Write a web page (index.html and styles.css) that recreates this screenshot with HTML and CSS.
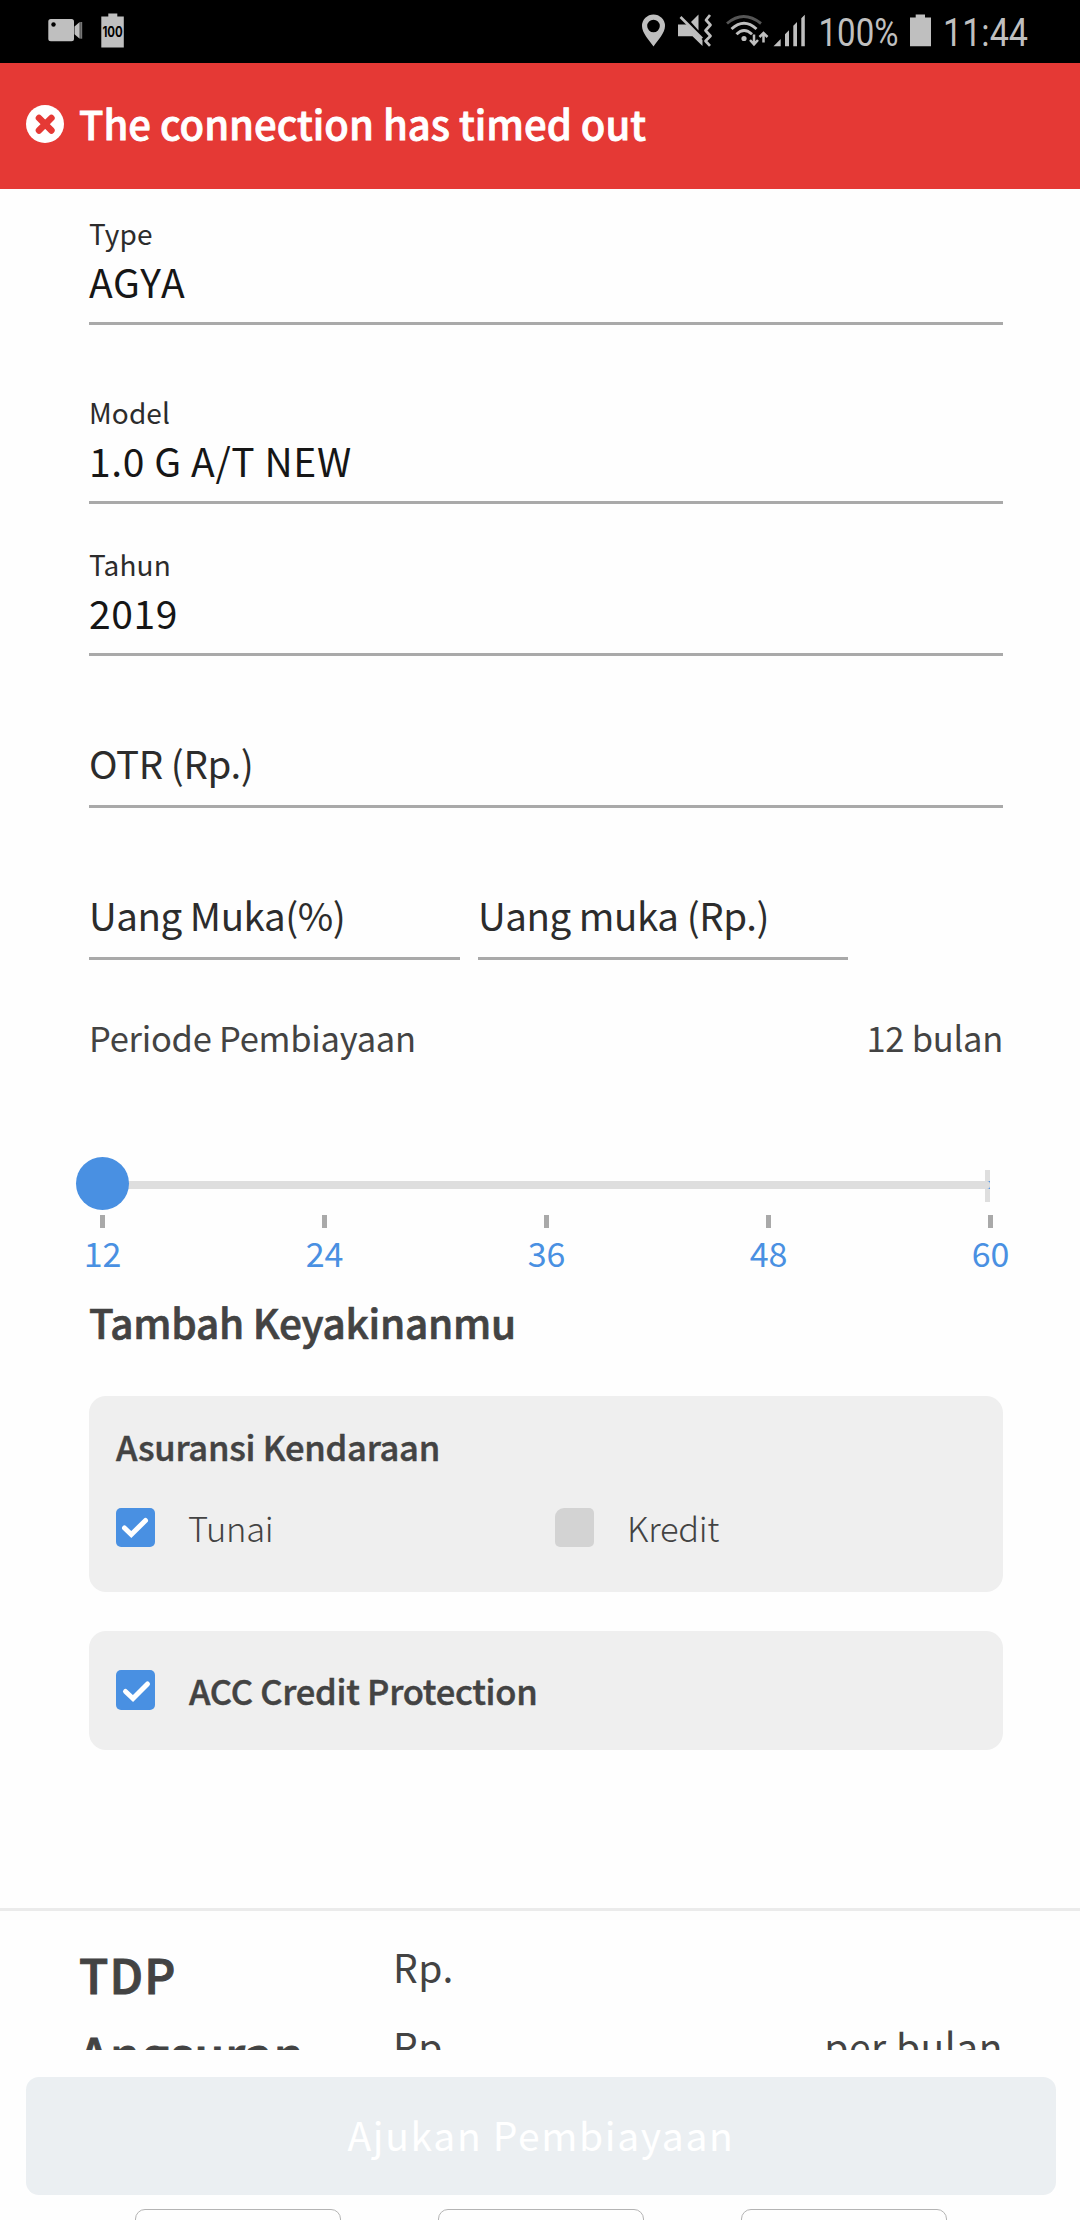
FILE: index.html
```html
<!DOCTYPE html>
<html lang="id">
<head>
<meta charset="utf-8">
<title>Simulasi Pembiayaan</title>
<link rel="stylesheet" href="styles.css">
</head>
<body>
<div class="screen">
  <header class="status-bar">
    <svg class="status-left" width="84" height="63" viewBox="46 0 84 63">
      <rect x="48.300" y="19" width="25.700" height="22.300" rx="2.500" fill="#bfbfbf"/>
      <circle cx="53.500" cy="24.500" r="2.200" fill="#000"/>
      <path d="M74.500 26.500L79.700 22V38.700L74.500 34.300Z" fill="#bfbfbf"/>
      <path d="M81.200 22V38.700" stroke="#777" stroke-width="2"/>
      <path d="M108.300 13.500h9v3h6.500v31h-22.500v-31h7z" fill="#bfbfbf"/>
      <text x="102.400" y="37" class="battery-label" textLength="20.300" lengthAdjust="spacingAndGlyphs">100</text>
    </svg>
    <svg class="status-right" width="400" height="63" viewBox="640 0 400 63">
      <g fill="#bfbfbf">
        <path fill-rule="evenodd" d="M653.500 14.500a11.500 11.500 0 0 1 11.500 11.500c0 7-7 14-11.500 20.500c-4.500-6.500-11.500-13.500-11.500-20.500a11.500 11.500 0 0 1 11.500-11.500zm0 5.200a6.300 6.300 0 1 0 0 12.600a6.300 6.300 0 1 0 0-12.600z"/>
        <path d="M678 24.500h9l15.500 15.500v6l-10-9.700h-14.500z"/>
        <path d="M691 22l7.500-7.500v16z"/>
        <circle cx="744" cy="38.500" r="2.600"/>
        <path d="M773.500 46.300h7.200v-7.300z"/>
        <path d="M785 46.300v-12l4-4v16zM793.300 46.300v-20.500l3.700-3.700v24.200zM801.300 46.300v-28l3.500-3.500v31.500z"/>
        <path d="M915.700 14.500h9.300v3h6v28.800h-21v-28.800h5.700z"/>
      </g>
      <path d="M680.500 17l21.500 21.500" stroke="#bfbfbf" stroke-width="2.700" fill="none"/>
      <path d="M710 15L706 20L710.500 25L705.500 30.500L710.500 36L705.500 41L710 45.800" stroke="#bfbfbf" stroke-width="2.700" stroke-linejoin="round" fill="none"/>
      <g fill="none" stroke-width="2.900">
        <path d="M727 23.500q16.500-14 34 0" stroke="#555"/>
        <path d="M731.500 29q12.500-11.500 25 0" stroke="#bfbfbf"/>
        <path d="M736.500 34.200q7.500-7.500 15.500 0" stroke="#bfbfbf"/>
        <path d="M754 34.500v10M750 40l4 4.300 4-4.300M763.500 42.500v-9.500M759.500 37l4-4 4 4" stroke="#bfbfbf" stroke-width="2.500"/>
      </g>
      <text x="818.500" y="46" class="status-text" textLength="80" lengthAdjust="spacingAndGlyphs">100%</text>
      <text x="943" y="46" class="status-text" textLength="85" lengthAdjust="spacingAndGlyphs">11:44</text>
    </svg>
  </header>

  <div class="banner">
    <svg class="banner-icon" width="38" height="38" viewBox="0 0 38 38">
      <circle cx="19" cy="19" r="19" fill="#fff"/>
      <path d="M13 13L25.400 25.400M25.400 13L13 25.400" stroke="#e53935" stroke-width="6.600" stroke-linecap="round"/>
    </svg>
    <span class="banner-text">The connection has timed out</span>
  </div>

  <main class="form">
    <div class="field field-first"><span class="label">Type</span><span class="value">AGYA</span></div>
    <div class="field field-model"><span class="label">Model</span><span class="value">1.0 G A/T NEW</span></div>
    <div class="field"><span class="label">Tahun</span><span class="value">2019</span></div>
    <div class="field field-empty"><span class="placeholder">OTR (Rp.)</span></div>
    <div class="field-row">
      <div class="field field-empty"><span class="placeholder">Uang Muka(%)</span></div>
      <div class="field field-empty"><span class="placeholder">Uang muka (Rp.)</span></div>
    </div>

    <div class="period"><span>Periode Pembiayaan</span><span>12 bulan</span></div>

    <div class="slider">
      <div class="track">
        <i class="track-end"></i>
        <i class="track-fill"></i>
        <i class="track-rail"></i>
        <i class="thumb"></i>
      </div>
      <div class="ticks">
        <span class="tick">12</span>
        <span class="tick">24</span>
        <span class="tick">36</span>
        <span class="tick">48</span>
        <span class="tick">60</span>
      </div>
    </div>

    <h2 class="heading">Tambah Keyakinanmu</h2>

    <section class="card card-insurance">
      <h3 class="card-title">Asuransi Kendaraan</h3>
      <div class="options">
        <div class="option">
          <svg class="box" width="39" height="39" viewBox="0 0 39 39"><rect width="39" height="39" rx="5" fill="#4990e2"/><path d="M8.500 20L15.300 26.500L29.500 12.500" fill="none" stroke="#fff" stroke-width="5" stroke-linecap="round"/></svg>
          <span>Tunai</span>
        </div>
        <div class="option">
          <span class="box box-off"></span>
          <span>Kredit</span>
        </div>
      </div>
    </section>

    <section class="card card-protection">
      <svg class="box" width="39" height="40" viewBox="0 0 39 40"><rect width="39" height="40" rx="5" fill="#4990e2"/><path d="M9.500 21.500L17 28.500L31.500 14" fill="none" stroke="#fff" stroke-width="5" stroke-linecap="round"/></svg>
      <span class="card-title">ACC Credit Protection</span>
    </section>
  </main>

  <section class="summary">
    <div class="summary-row"><b>TDP</b><span class="amount">Rp.</span></div>
    <div class="summary-row"><b>Angsuran</b><span class="amount">Rp.</span><span class="unit">per bulan</span></div>
  </section>

  <footer class="footer">
    <div class="submit">Ajukan Pembiayaan</div>
    <div class="tabs"><i></i><i></i><i></i></div>
  </footer>
</div>
</body>
</html>
```
FILE: styles.css
```css
* { box-sizing: border-box; }
body { margin: 0; background: #fff; }
.screen {
  width: 1080px;
  height: 2220px;
  overflow: hidden;
  display: flex;
  flex-direction: column;
  background: #fefefe;
  color: #434343;
  font-family: "Noto Sans CJK SC", "Noto Sans CJK JP", "Noto Sans", sans-serif;
  white-space: nowrap;
}
.status-bar {
  height: 63px;
  flex: none;
  background: #000;
  display: flex;
  justify-content: space-between;
  padding: 0 40px 0 46px;
}
.battery-label { font: 700 14px Inter, sans-serif; fill: #000; }
.status-text { font: 400 39px Roboto, sans-serif; fill: #bfbfbf; }

.banner {
  height: 126px;
  flex: none;
  background: #e53935;
  color: #fff;
  display: flex;
  align-items: flex-start;
  padding: 42px 0 0 26px;
  gap: 15px;
}
.banner-text {
  font-size: 40px;
  font-weight: 500;
  line-height: 48px;
  margin-top: -6px;
  letter-spacing: 0;
  -webkit-text-stroke: 0.800px;
}

.form { height: 1719px; flex: none; padding: 0 77px 0 89px; }
.field {
  height: 152px;
  display: flex;
  flex-direction: column;
  justify-content: flex-end;
  border-bottom: 3px solid #a9a9a9;
  padding-bottom: 17px;
}
.field-first { height: 136px; }
.field-model { height: 179px; }
.field-empty { padding-bottom: 19px; }
.label { font-size: 28px; line-height: 34px; margin-bottom: 7px; color: #2c2c2c; letter-spacing: 0.100px; }
.value { font-size: 39px; line-height: 48px; color: #161616; letter-spacing: 0.600px; }
.placeholder { font-size: 38.500px; line-height: 48px; color: #2c2c2c; letter-spacing: -0.450px; }
.field-row { display: flex; gap: 18px; }
.field-row .field { width: 371px; }
.field-row .field + .field { width: 370px; }

.period {
  display: flex;
  justify-content: space-between;
  margin-top: 53px;
  font-size: 34.500px;
  line-height: 48px;
  letter-spacing: -0.250px;
}
.slider { margin: 120px 13px 0 13px; width: 888px; }
.track { height: 8px; position: relative; }
.track i { position: absolute; }
.track-end { right: 0; top: -11px; width: 5px; height: 32px; background: #dedede; }
.track-fill { right: 0; top: 0; width: 3px; height: 8px; background: #4990e2; }
.track-rail { left: 0; right: 0; top: 0; height: 8px; background: #dedede; border-radius: 0 3px 3px 0; }
.thumb {
  left: -26px;
  top: -24px;
  width: 53px;
  height: 53px;
  border-radius: 50%;
  background: #4990e2;
}
.ticks {
  display: flex;
  justify-content: space-between;
  margin: 26px -30.500px 0 -29.500px;
  color: #4990e2;
  font-size: 34px;
  line-height: 46px;
}
.tick { width: 60px; text-align: center; }
.tick::before {
  content: "";
  display: block;
  width: 5px;
  height: 13px;
  margin: 0 auto 2px;
  background: #a9a9a9;
}
.heading {
  margin: 16px 0 0;
  font-size: 40.500px;
  font-weight: 500;
  line-height: 60px;
  letter-spacing: -0.250px;
  -webkit-text-stroke: 0.700px;
}

.card { background: #efefef; border-radius: 17px; padding-left: 27px; }
.card-insurance { height: 196px; margin-top: 44px; padding-top: 26px; }
.card-title {
  margin: 0;
  font-size: 34.500px;
  font-weight: 500;
  line-height: 48px;
  letter-spacing: -0.250px;
  -webkit-text-stroke: 0.500px;
}
.options { display: flex; margin-top: 38px; }
.option {
  width: 439px;
  display: flex;
  align-items: flex-start;
  gap: 33px;
  font-size: 34.500px;
  font-weight: 300;
  line-height: 38px;
  letter-spacing: -0.300px;
}
.box { flex: none; width: 39px; display: block; }
.box-off { height: 39px; background: #d3d3d3; border-radius: 9px 5px 5px 5px; }
.card-protection {
  height: 119px;
  margin-top: 39px;
  padding-bottom: 2px;
  display: flex;
  align-items: center;
  gap: 34px;
}

.summary {
  height: 142px;
  flex: none;
  overflow: hidden;
  border-top: 3px solid #ebebeb;
  padding: 27px 77px 0 79px;
}
.summary-row {
  height: 79px;
  display: flex;
  align-items: flex-start;
  font-size: 39px;
  line-height: 56px;
  letter-spacing: 0.500px;
}
.summary-row b {
  width: 314px;
  font-size: 48px;
  font-weight: 500;
  line-height: 70px;
  letter-spacing: 1.200px;
  -webkit-text-stroke: 1px;
}
.unit { margin-left: auto; }

.footer { padding: 27px 24px 0 26px; display: flex; flex-direction: column; }
.submit {
  height: 118px;
  flex: none;
  border-radius: 13px;
  background: #ebeff2;
  color: #fff;
  font-size: 39px;
  line-height: 114px;
  letter-spacing: 1.650px;
  text-align: center;
}
.tabs { display: flex; gap: 97px; padding: 14px 0 0 109px; }
.tabs i {
  width: 206px;
  height: 40px;
  border: 1.500px solid #b4b4b4;
  border-radius: 10px;
}
```
